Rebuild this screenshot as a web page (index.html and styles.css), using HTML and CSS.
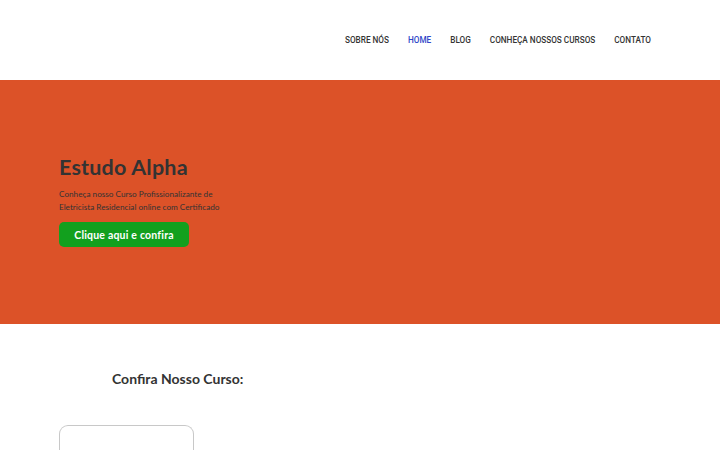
FILE: index.html
```html
<!DOCTYPE html>
<html lang="pt">
<head>
<meta charset="utf-8">
<link rel="stylesheet" href="styles.css">
</head>
<body>
<header class="header">
  <nav class="nav">
    <a class="nav-link" href="#">SOBRE NÓS</a>
    <a class="nav-link active" href="#">HOME</a>
    <a class="nav-link" href="#">BLOG</a>
    <a class="nav-link" href="#">CONHEÇA NOSSOS CURSOS</a>
    <a class="nav-link" href="#">CONTATO</a>
  </nav>
</header>
<section class="hero">
  <h1 class="hero-title">Estudo Alpha</h1>
  <p class="hero-text">Conheça nosso Curso Profissionalizante de<br>Eletricista Residencial online com Certificado</p>
  <a class="hero-btn" href="#">Clique aqui e confira</a>
</section>
<section class="course">
  <h2 class="course-title">Confira Nosso Curso:</h2>
  <div class="card"></div>
</section>
</body>
</html>
```
FILE: styles.css
```css
* { box-sizing: border-box; }
html, body { margin: 0; padding: 0; }
body {
  font-family: "Lato", "Liberation Sans", sans-serif;
  color: #333;
  background: #fff;
  overflow: hidden;
  height: 450px;
}
.header {
  height: 80px;
  display: flex;
  align-items: center;
  justify-content: flex-end;
  padding-right: 69px;
}
.nav {
  display: flex;
  gap: 19px;
  margin-top: -1px;
}
.nav-link {
  font-family: "Roboto", "Liberation Sans", sans-serif;
  font-size: 8.2px;
  font-weight: 500;
  color: #333;
  text-decoration: none;
}
.nav-link.active { color: #2e47c8; }
.hero {
  background: #dc5228;
  height: 244px;
  padding-left: 59px;
  padding-bottom: 1px;
  display: flex;
  flex-direction: column;
  align-items: flex-start;
  justify-content: center;
}
.hero-title {
  margin: 0 0 9px;
  font-size: 21.5px;
  font-weight: 700;
  color: #333;
  letter-spacing: 0.2px;
  line-height: 1.1;
}
.hero-text {
  margin: 0 0 9px;
  font-size: 8.2px;
  line-height: 12.5px;
  color: #333;
}
.hero-btn {
  display: inline-flex;
  align-items: center;
  justify-content: center;
  width: 130px;
  height: 25px;
  background: #12a01e;
  color: #fff;
  font-size: 10.5px;
  font-weight: 700;
  text-decoration: none;
  border-radius: 5px;
  letter-spacing: 0.2px;
}
.course {
  padding: 46px 0 0 59px;
}
.course-title {
  margin: 0 0 37px 53px;
  font-size: 14px;
  font-weight: 700;
  color: #333;
  line-height: 18px;
}
.card {
  width: 135px;
  height: 40px;
  border: 1px solid #c8c8c8;
  border-bottom: none;
  border-radius: 9px 9px 0 0;
}
```
